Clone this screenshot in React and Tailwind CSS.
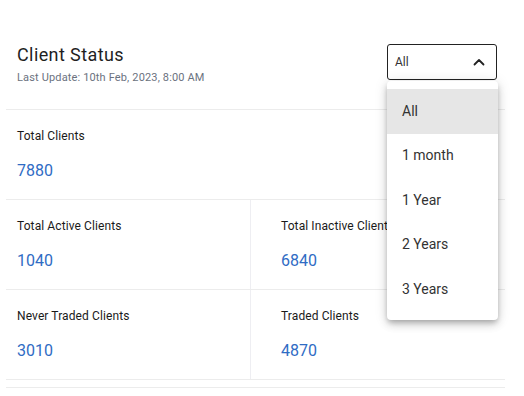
import React from "react";

const font = { fontFamily: "Roboto, 'Liberation Sans', sans-serif" };

function Stat({ label, value, className = "" }) {
  return (
    <div className={`flex flex-col ${className}`}>
      <div className="text-[12px] leading-[16px] text-[#1a1a1a] font-normal tracking-[0.1px] mt-[18px]">{label}</div>
      <div className="text-[16px] leading-[20px] text-[#2f6cc4] mt-[17px]">{value}</div>
    </div>
  );
}

export default function App() {
  const items = ["All", "1 month", "1 Year", "2 Years", "3 Years"];
  return (
    <div className="relative w-[524px] h-[396px] bg-white overflow-hidden" style={font}>
      <div className="ml-[6px] w-[499px]">
        <div className="flex justify-between h-[110px] border-b border-[#ececec] pl-[11px] pr-[8px] pt-[44px]">
          <div>
            <div className="text-[18px] leading-[22px] text-[#1f1f1f] tracking-[0.4px]">Client Status</div>
            <div className="text-[11px] leading-[14px] text-[#6b7280] mt-[5px] tracking-[0.15px]">Last Update: 10th Feb, 2023, 8:00 AM</div>
          </div>
          <div className="w-[110px] h-[36px] border-[1.5px] border-[#222] rounded-[3px] flex items-center justify-between pl-[7px] pr-[11px]">
            <span className="text-[12px] text-[#333]">All</span>
            <svg width="12" height="8" viewBox="0 0 12 8" fill="none">
              <path d="M1.5 6.5 L6 2 L10.5 6.5" stroke="#222" strokeWidth="1.8" strokeLinecap="round" strokeLinejoin="round" />
            </svg>
          </div>
        </div>
        <div className="h-[90px] border-b border-[#ececec] pl-[11px]">
          <Stat label="Total Clients" value="7880" />
        </div>
        <div className="grid grid-cols-[245px_1fr] h-[90px] border-b border-[#ececec]">
          <Stat label="Total Active Clients" value="1040" className="pl-[11px] border-r border-[#eeeef2]" />
          <Stat label="Total Inactive Clients" value="6840" className="pl-[30px]" />
        </div>
        <div className="grid grid-cols-[245px_1fr] h-[90px] border-b border-[#ececec]">
          <Stat label="Never Traded Clients" value="3010" className="pl-[11px] border-r border-[#eeeef2]" />
          <Stat label="Traded Clients" value="4870" className="pl-[30px]" />
        </div>
        <div className="mt-[7px] border-t border-[#ececec]" />
      </div>

      <div className="absolute left-[387px] top-[81px] w-[111px] bg-white rounded-[4px] py-[8px] shadow-[0_3px_5px_-1px_rgba(0,0,0,0.2),0_5px_8px_0_rgba(0,0,0,0.14),0_1px_14px_0_rgba(0,0,0,0.12)]">
        {items.map((it, i) => (
          <div
            key={it}
            className={`h-[44.5px] flex items-center pl-[15px] text-[14px] text-[#333] ${i === 0 ? "bg-[#e6e6e6]" : ""}`}
          >
            {it}
          </div>
        ))}
      </div>
    </div>
  );
}
